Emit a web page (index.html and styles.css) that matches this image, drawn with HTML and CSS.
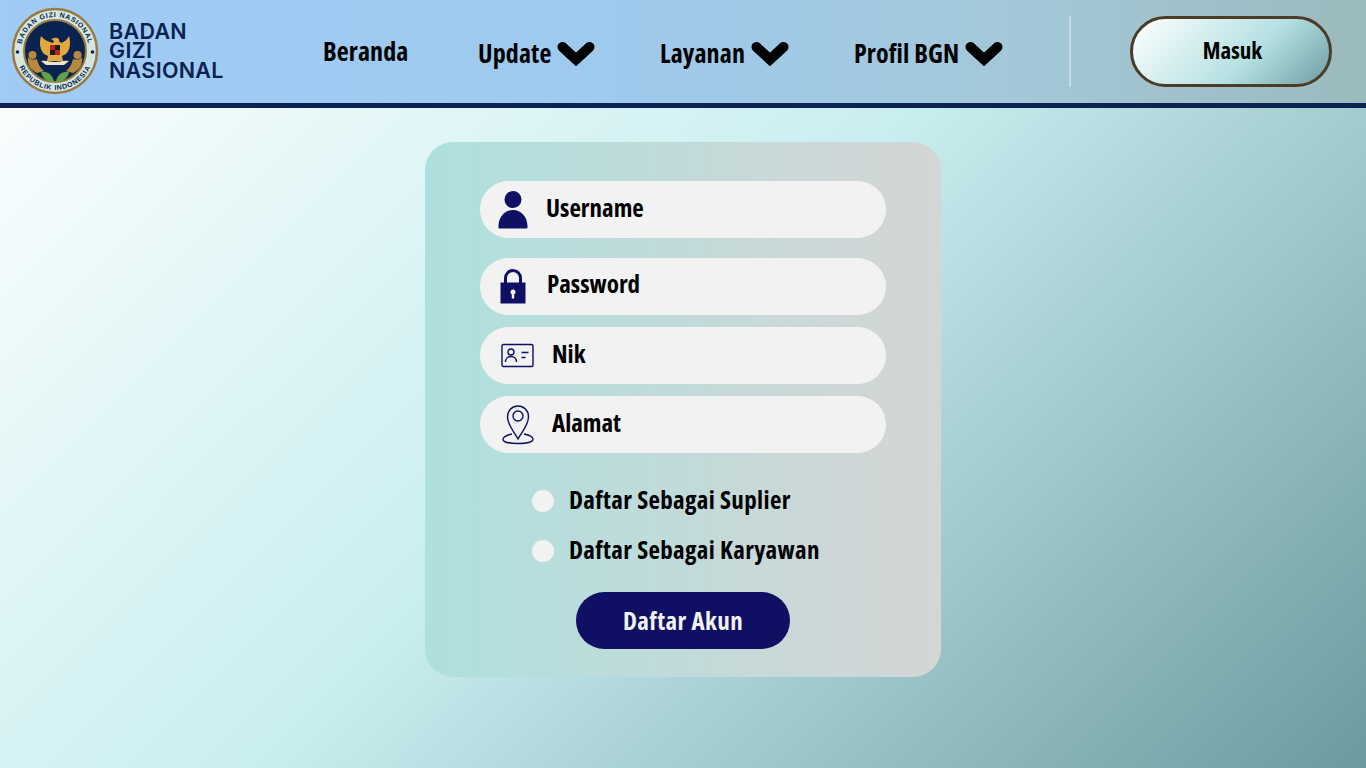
FILE: index.html
```html
<!DOCTYPE html>
<html lang="id">
<head>
  <meta charset="UTF-8" />
  <title>Daftar Akun - Badan Gizi Nasional</title>
  <link rel="stylesheet" href="styles.css">
</head>
<body>
  <header class="topbar">
    <div class="brand">
      <svg class="emblem" viewBox="0 0 88 88" width="88" height="88">
        <defs>
          <path id="arcTop" d="M10 44a34 34 0 0 1 68 0" />
          <path id="arcBottom" d="M5 44a39 39 0 0 0 78 0" />
        </defs>
        <circle cx="44" cy="44" r="42" fill="#d3e6e0" stroke="#9a7b3f" stroke-width="2.500" />
        <circle cx="44" cy="44" r="31" fill="#0b2350" stroke="#9a7b3f" stroke-width="2" />
        <text class="emblem-text"><textPath href="#arcTop" startOffset="50%" text-anchor="middle">BADAN GIZI NASIONAL</textPath></text>
        <text class="emblem-text"><textPath href="#arcBottom" startOffset="50%" text-anchor="middle">REPUBLIK INDONESIA</textPath></text>
        <circle cx="6.500" cy="45" r="1.800" fill="#0b2350" />
        <circle cx="81.500" cy="45" r="1.800" fill="#0b2350" />
        <circle cx="21.500" cy="48" r="4" fill="#b98a3e" />
        <circle cx="66.500" cy="48" r="4" fill="#b98a3e" />
        <path d="M17 50c-1 8 3 13 9 16l7-2c-4-3-6-7-7-12-3 1-7 1-9-2zM71 50c1 8-3 13-9 16l-7-2c4-3 6-7 7-12 3 1 7 1 9-2z" fill="#b98a3e" />
        <path d="M30 29c-2 7-1 14 3 18l4 2-1 5h16l-1-5 4-2c4-4 5-11 3-18-2 4-5 6-8 7l-2-2c1-2-2-4-5-3l-3 1 3 2-1 2c-4-1-9-3-12-7z" fill="#e0aa3e" />
        <path d="M30 54c6-1 9 1 14 1s8-2 14-1l-5 4h-18z" fill="#efe4c8" />
        <rect x="39" y="38" width="10" height="10" fill="#b3261e" />
        <path d="M44 38h5v5h-5zM39 43h5v5h-5z" fill="#1d1d1d" />
        <path d="M43 75c-7 0-12-4-13-10 7-1 12 3 13 10zM45 75c7 0 12-4 13-10-7-1-12 3-13 10z" fill="#5fa24a" />
      </svg>
      <div class="brand-name">BADAN<br>GIZI<br>NASIONAL</div>
    </div>
    <nav class="menu">
      <a class="menu-home">Beranda</a>
      <a class="menu-update">Update <svg class="chev" viewBox="0 0 38 25"><path d="M5.500 6L19 18.500 32.500 6" /></svg></a>
      <a class="menu-layanan">Layanan <svg class="chev" viewBox="0 0 38 25"><path d="M5.500 6L19 18.500 32.500 6" /></svg></a>
      <a class="menu-profil">Profil BGN <svg class="chev" viewBox="0 0 38 25"><path d="M5.500 6L19 18.500 32.500 6" /></svg></a>
    </nav>
    <div class="divider"></div>
    <button class="login">Masuk</button>
  </header>

  <main>
    <form class="card">
      <div class="field field-first">
        <svg class="ico" viewBox="0 0 32 40" width="32" height="40"><circle cx="16" cy="9.500" r="8.500" fill="#0f0f63" /><path d="M1.500 37.500c-.500-10 6-17.500 14.500-17.500s15 7.500 14.500 17.500c0 .500-.500 1-1 1h-27c-.500 0-1-.500-1-1z" fill="#0f0f63" /></svg>
        <span class="label">Username</span>
      </div>
      <div class="field">
        <svg class="ico" viewBox="0 0 32 40" width="32" height="40"><path d="M8.500 18v-7a7.500 7.500 0 0 1 15 0v7" fill="none" stroke="#0f0f63" stroke-width="3" /><path fill-rule="evenodd" d="M3.500 15.500h25v21h-25zM16 22.500a2.500 2.500 0 0 0-1.200 4.700v4.300h2.400v-4.300a2.500 2.500 0 0 0-1.200-4.700z" fill="#0f0f63" /></svg>
        <span class="label label-pass">Password</span>
      </div>
      <div class="field field-id">
        <svg class="ico" viewBox="0 0 34 26" width="34" height="26"><rect x="1" y="1.500" width="31" height="22" rx="1.500" fill="none" stroke="#0f0f63" stroke-width="1.400" /><circle cx="10" cy="9" r="3" fill="none" stroke="#0f0f63" stroke-width="1.400" /><path d="M4.500 19c0-3.500 2.500-5.500 5.500-5.500s5.500 2 5.500 5.500M20.500 9.500h7M20.500 14.500h4" fill="none" stroke="#0f0f63" stroke-width="1.400" /></svg>
        <span class="label">Nik</span>
      </div>
      <div class="field field-id">
        <svg class="ico ico-pin" viewBox="0 0 34 42" width="34" height="42"><path d="M17 36C12 27 6.500 22 6.500 13.500a10.500 10.500 0 0 1 21 0C27.500 22 22 27 17 36z" fill="none" stroke="#0f0f63" stroke-width="1.400" /><circle cx="17" cy="13" r="5" fill="none" stroke="#0f0f63" stroke-width="1.400" /><path d="M11 31c-5 1-9 3-9 5.500S9 40.500 17 40.500s15-1.500 15-4-4-4.500-9-5.500" fill="none" stroke="#0f0f63" stroke-width="1.400" /></svg>
        <span class="label">Alamat</span>
      </div>

      <div class="options">
        <div class="option"><span class="dot"></span><span class="opt-text">Daftar Sebagai Suplier</span></div>
        <div class="option"><span class="dot"></span><span class="opt-text">Daftar Sebagai Karyawan</span></div>
      </div>

      <button type="button" class="submit">Daftar Akun</button>
    </form>
  </main>
</body>
</html>
```

FILE: styles.css
```css
* {margin: 0; padding: 0; box-sizing: border-box;}
html, body {
  height: 100%;
}
body {
  font-family: 'Open Sans', 'Liberation Sans', sans-serif;
  font-stretch: 75%;
  font-weight: 700;
  color: #000;
  overflow: hidden;
  background: linear-gradient(135deg, #ffffff 0%, #c9eef0 48%, #6b9a9e 100%);
}

/* top bar */
.topbar {
  height: 108px;
  display: flex;
  align-items: flex-start;
  padding-left: 11px;
  background: linear-gradient(90deg, #a0cbf5 0%, #9ecaee 45%, #a3c8d8 75%, #9bbabd 100%);
  border-bottom: 5px solid #0b2350;
}
.brand {
  display: flex;
  align-items: center;
  gap: 10px;
  width: 312px;
  padding-top: 7px;
}
.emblem {
  flex: none;
}
.emblem-text {
  font-family: 'Liberation Sans', sans-serif;
  font-stretch: normal;
  font-weight: bold;
  font-size: 7px;
  letter-spacing: .7px;
  fill: #0b2350;
}
.brand-name {
  font-family: 'Inter', sans-serif;
  font-stretch: 100%;
  font-weight: 600;
  font-size: 21.500px;
  letter-spacing: .3px;
  line-height: 19.500px;
  color: #0b2350;
}
.menu {
  display: flex;
  width: 746px;
  padding-top: 35px;
  font-size: 26px;
  letter-spacing: .1px;
}
.menu a {
  display: flex;
  align-items: center;
  gap: 6px;
  height: 36px;
  white-space: nowrap;
}
.menu-home {width: 155px; margin-top: -2px;}
.menu-update {width: 182px; gap: 5px;}
.menu-layanan {width: 194px; gap: 7px;}
.menu-profil {gap: 9px;}
.chev {
  flex: none;
  width: 38px;
  height: 25px;
}
.chev path {
  fill: none;
  stroke: #000;
  stroke-width: 10;
  stroke-linecap: round;
  stroke-linejoin: miter;
}
.divider {
  width: 2px;
  height: 71px;
  margin-top: 16px;
  background: #c3dbe8;
}
.login {
  width: 202px;
  height: 71px;
  margin: 16px 0 0 59px;
  padding: 0 0 4px 3px;
  border: 3px solid #4a3c25;
  border-radius: 36px;
  background: linear-gradient(135deg, #ffffff 0%, #b4e0e2 60%, #6f9da2 100%);
  font: inherit;
  font-size: 23px;
  color: #000;
}

/* form */
main {
  display: flex;
  justify-content: center;
  padding: 34px 0 0 0;
}
.card {
  width: 516px;
  height: 535px;
  padding: 39px 55px 0;
  border-radius: 28px;
  background: linear-gradient(90deg, #aee0de 0%, #d5d5d5 100%);
}
.field {
  display: flex;
  align-items: center;
  width: 406px;
  height: 57px;
  margin-bottom: 12px;
  padding-left: 17px;
  border-radius: 29px;
  background: #f2f2f2;
  font-size: 25px;
}
.field-first {
  margin-bottom: 20px;
}
.ico {
  flex: none;
  margin-right: 17px;
}
.ico-pin {
  margin-bottom: 2px;
}
.label {
  margin-bottom: 6px;
}
.label-pass {
  margin-left: 1px;
  margin-bottom: 8px;
}
.field-id {
  padding-left: 21px;
}
.options {
  display: flex;
  flex-direction: column;
  gap: 18px;
  margin: 32px 0 0 52px;
}
.option {
  display: flex;
  align-items: center;
  gap: 15px;
  height: 32px;
  font-size: 25px;
  letter-spacing: .35px;
  white-space: nowrap;
}
.opt-text {
  margin-bottom: 4px;
}
.dot {
  width: 22px;
  height: 22px;
  border-radius: 50%;
  background: #f2f2f2;
}
.submit {
  display: block;
  width: 214px;
  height: 57px;
  margin: 25px 0 0 96px;
  padding-bottom: 2px;
  border: none;
  border-radius: 29px;
  background: #0f0f63;
  color: #f2f2f2;
  font: inherit;
  font-size: 25px;
  letter-spacing: .4px;
}
```
